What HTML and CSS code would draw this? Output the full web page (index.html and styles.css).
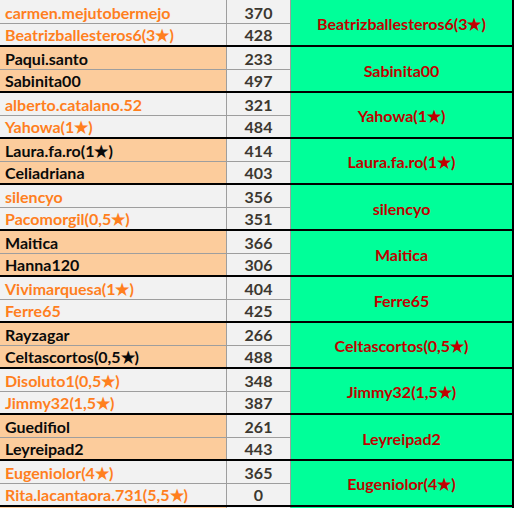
FILE: index.html
```html
<!DOCTYPE html>
<html lang="es">
<head>
<meta charset="utf-8">
<title>Parejas</title>
<link rel="stylesheet" href="styles.css">
</head>
<body>
<div class="sheet">
  <div class="group plain first">
    <div class="name">carmen.mejutobermejo</div><div class="num">370</div><div class="win">Beatrizballesteros6(3★)</div>
    <div class="name">Beatrizballesteros6(3★)</div><div class="num">428</div>
  </div>
  <div class="group peach">
    <div class="name">Paqui.santo</div><div class="num">233</div><div class="win">Sabinita00</div>
    <div class="name">Sabinita00</div><div class="num">497</div>
  </div>
  <div class="group plain">
    <div class="name">alberto.catalano.52</div><div class="num">321</div><div class="win">Yahowa(1★)</div>
    <div class="name">Yahowa(1★)</div><div class="num">484</div>
  </div>
  <div class="group peach">
    <div class="name">Laura.fa.ro(1★)</div><div class="num">414</div><div class="win">Laura.fa.ro(1★)</div>
    <div class="name">Celiadriana</div><div class="num">403</div>
  </div>
  <div class="group plain">
    <div class="name">silencyo</div><div class="num">356</div><div class="win">silencyo</div>
    <div class="name">Pacomorgil(0,5★)</div><div class="num">351</div>
  </div>
  <div class="group peach">
    <div class="name">Maitica</div><div class="num">366</div><div class="win">Maitica</div>
    <div class="name">Hanna120</div><div class="num">306</div>
  </div>
  <div class="group plain">
    <div class="name">Vivimarquesa(1★)</div><div class="num">404</div><div class="win">Ferre65</div>
    <div class="name">Ferre65</div><div class="num">425</div>
  </div>
  <div class="group peach">
    <div class="name">Rayzagar</div><div class="num">266</div><div class="win">Celtascortos(0,5★)</div>
    <div class="name">Celtascortos(0,5★)</div><div class="num">488</div>
  </div>
  <div class="group plain">
    <div class="name">Disoluto1(0,5★)</div><div class="num">348</div><div class="win">Jimmy32(1,5★)</div>
    <div class="name">Jimmy32(1,5★)</div><div class="num">387</div>
  </div>
  <div class="group peach">
    <div class="name">Guedifiol</div><div class="num">261</div><div class="win">Leyreipad2</div>
    <div class="name">Leyreipad2</div><div class="num">443</div>
  </div>
  <div class="group plain">
    <div class="name">Eugeniolor(4★)</div><div class="num">365</div><div class="win">Eugeniolor(4★)</div>
    <div class="name">Rita.lacantaora.731(5,5★)</div><div class="num">0</div>
  </div>
  <div class="group peach">
    <div class="name">&nbsp;</div><div class="num">&nbsp;</div><div class="win">&nbsp;</div>
    <div class="name">&nbsp;</div><div class="num">&nbsp;</div>
  </div>
</div>
</body>
</html>
```
FILE: styles.css
```css
html, body {
  margin: 0;
  padding: 0;
  background: #ffffff;
  overflow: hidden;
}

.sheet {
  display: flex;
  flex-direction: column;
  width: 514px;
  font-family: Lato, "Liberation Sans", sans-serif;
  font-weight: 700;
  font-size: 16px;
}

.group {
  display: grid;
  grid-template-columns: 227px 64px 221px;
  grid-template-rows: 23px 21px;
  border-bottom: 2px solid #000;
  border-right: 2px solid #000;
}

.group.first {
  grid-template-rows: 24px 21px;
}

.name, .num {
  border-right: 1px solid #9e9e9e;
  background: #f2f2f2;
  display: flex;
  align-items: flex-end;
  padding-bottom: 2px;
  line-height: 17px;
  white-space: nowrap;
  overflow: hidden;
}

.name {
  padding-left: 5px;
}

.num {
  justify-content: center;
  color: #3c3830;
}

.group > .name:nth-child(1),
.group > .num:nth-child(2) {
  border-bottom: 1px solid #9e9e9e;
}

.win {
  grid-column: 3;
  grid-row: 1 / span 2;
  background: #00ff99;
  color: #c00000;
  display: flex;
  align-items: center;
  justify-content: center;
  padding-top: 2px;
}

.plain .name {
  color: #ff7f1e;
}

.peach .name {
  background: #fccc9c;
  color: #0a0a0a;
}
```
